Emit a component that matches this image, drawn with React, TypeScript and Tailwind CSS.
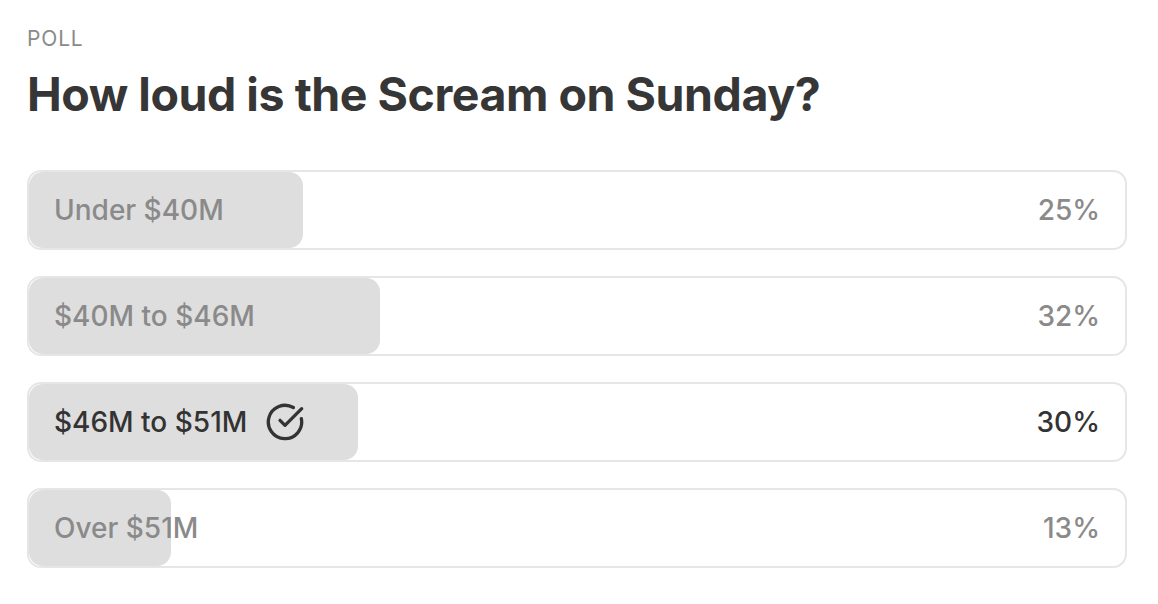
import { CircleCheckBig } from "lucide-react";

const options = [
  { label: "Under $40M", pct: 25 },
  { label: "$40M to $46M", pct: 32 },
  { label: "$46M to $51M", pct: 30, picked: true },
  { label: "Over $51M", pct: 13 },
];

export default function App() {
  return (
    <div className="min-h-screen bg-white px-[27px] pt-[27px] font-['Inter',sans-serif]">
      <p className="text-[21px] leading-[24px] tracking-[0.04em] text-[#8a8a8a]">POLL</p>
      <h1 className="mt-[15px] text-[46.5px] font-bold leading-[56px] tracking-[-0.01em] text-[#363636]">
        How loud is the Scream on Sunday?
      </h1>

      <div className="mt-[48px] flex w-[1100px] flex-col gap-[26px]">
        {options.map((opt) => (
          <div
            key={opt.label}
            className="relative h-[80px] overflow-hidden rounded-[14px] border-2 border-[#e6e6e6]"
          >
            <div
              className="absolute inset-y-0 left-0 rounded-[14px] bg-[#dedede]"
              style={{ width: `${opt.pct}%` }}
            />
            <div
              className={`relative flex h-full items-center justify-between pl-[25px] pr-[25px] text-[28px] font-medium ${
                opt.picked ? "text-[#333333]" : "text-[#8a8a8a]"
              }`}
            >
              <span className="flex items-center gap-[18px]">
                {opt.label}
                {opt.picked && <CircleCheckBig className="h-[40px] w-[40px]" strokeWidth={2} />}
              </span>
              <span>{opt.pct}%</span>
            </div>
          </div>
        ))}
      </div>
    </div>
  );
}
